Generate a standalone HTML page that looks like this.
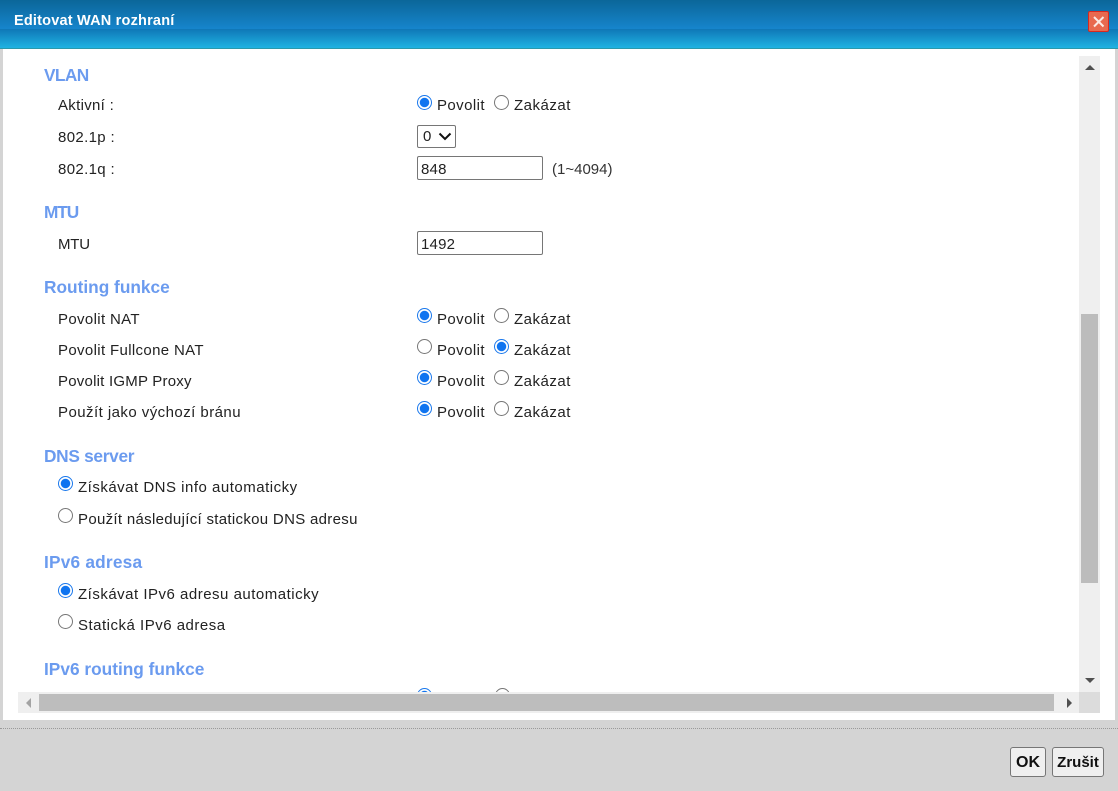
<!DOCTYPE html>
<html lang="cs"><head><meta charset="utf-8"><title>Editovat WAN rozhraní</title>
<style>
html,body{margin:0;padding:0}
body{position:relative;width:1118px;height:791px;overflow:hidden;background:#d4d4d4;font-family:"Liberation Sans",sans-serif;color:#222;font-size:15px}
div,span,input,select,svg{position:absolute}
.t{white-space:nowrap;line-height:18px;height:18px}
.h{white-space:nowrap;font-weight:bold;font-size:17.3px;line-height:22px;height:22px;color:#6b9bef;left:44px}
.l{left:58px;letter-spacing:.35px}
.p{left:437px;letter-spacing:.42px}
.z{left:514px;letter-spacing:.5px}
input[type=radio]{margin:0;width:15px;height:15px;appearance:none;-webkit-appearance:none;box-sizing:border-box;border:1.3px solid #767676;border-radius:50%;background:#fff}
input[type=radio]:checked{border:1.8px solid #1a78ec;background:radial-gradient(circle,#0f74f0 0,#0f74f0 4.4px,#fff 5px)}
.box{border:1px solid #767676;border-radius:2px;background:#fff;box-sizing:border-box;left:417px;width:126px;height:24px;line-height:25px;padding-left:3px;font-size:15px;letter-spacing:.2px;color:#222}
.btn{border:1px solid #767676;border-radius:3px;background:#efefef;box-sizing:border-box;text-align:center;font-weight:bold;font-size:16px;color:#111;top:747px;height:30px;line-height:29px}
</style></head><body>
<div style="left:0;top:0;width:1118px;height:29px;background:linear-gradient(#0b6699,#1685cc)"></div>
<div style="left:0;top:29px;width:1118px;height:19px;background:linear-gradient(#0f77b7,#1fb3e2)"></div>
<div style="left:0;top:48px;width:1118px;height:1px;background:#2b98ab"></div>
<div class="t" style="left:14px;top:12px;color:#fff;font-weight:bold;font-size:14.5px;letter-spacing:.2px">Editovat WAN rozhraní</div>
<svg style="left:1088px;top:11px" width="22" height="22" viewBox="0 0 22 22"><rect x=".5" y=".5" width="20" height="20" rx="1.5" fill="#e8694f" stroke="#d8281f"/><path d="M6 6L15.5 15.5M15.5 6L6 15.5" stroke="#fbe9e4" stroke-width="2"/></svg>

<div style="left:3px;top:49px;width:1112px;height:671px;background:#fff;overflow:hidden">
<div style="left:0;top:0;width:1097px;height:643px;overflow:hidden">
<input type="radio" checked style="left:414px;top:639px"><input type="radio" style="left:492px;top:639px">
</div>
</div>

<div class="h" style="top:64px;letter-spacing:-.6px">VLAN</div>
<div class="t l" style="top:97px;letter-spacing:.3px">Aktivní :</div>
<input type="radio" checked style="left:417px;top:95px"><div class="t p" style="top:97px">Povolit</div>
<input type="radio" style="left:494px;top:95px"><div class="t z" style="top:97px">Zakázat</div>
<div class="t l" style="top:129px">802.1p :</div>
<div style="left:417px;top:125px;width:39px;height:23px;box-sizing:border-box;border:1px solid #767676;border-radius:2px;background:#fff">
<span class="t" style="left:5px;top:2px">0</span>
<svg style="left:20px;top:6px" width="14" height="9" viewBox="0 0 14 9"><path d="M1.5 1.5L7 7L12.5 1.5" fill="none" stroke="#111" stroke-width="2"/></svg></div>
<div class="t l" style="top:161px">802.1q :</div>
<div class="box" style="top:156px">848</div>
<div class="t" style="left:552px;top:161px;letter-spacing:0;color:#333">(1~4094)</div>

<div class="h" style="top:201px;letter-spacing:-1.1px">MTU</div>
<div class="t l" style="top:236px;letter-spacing:-.2px">MTU</div>
<div class="box" style="top:231px">1492</div>

<div class="h" style="top:276px">Routing funkce</div>
<div class="t l" style="top:311px">Povolit NAT</div>
<input type="radio" checked style="left:417px;top:308px"><div class="t p" style="top:311px">Povolit</div>
<input type="radio" style="left:494px;top:308px"><div class="t z" style="top:311px">Zakázat</div>
<div class="t l" style="top:342px">Povolit Fullcone NAT</div>
<input type="radio" style="left:417px;top:339px"><div class="t p" style="top:342px">Povolit</div>
<input type="radio" checked style="left:494px;top:339px"><div class="t z" style="top:342px">Zakázat</div>
<div class="t l" style="top:373px;letter-spacing:.22px">Povolit IGMP Proxy</div>
<input type="radio" checked style="left:417px;top:370px"><div class="t p" style="top:373px">Povolit</div>
<input type="radio" style="left:494px;top:370px"><div class="t z" style="top:373px">Zakázat</div>
<div class="t l" style="top:404px;letter-spacing:.45px">Použít jako výchozí bránu</div>
<input type="radio" checked style="left:417px;top:401px"><div class="t p" style="top:404px">Povolit</div>
<input type="radio" style="left:494px;top:401px"><div class="t z" style="top:404px">Zakázat</div>

<div class="h" style="top:445px;letter-spacing:-.3px">DNS server</div>
<input type="radio" checked style="left:58px;top:476px"><div class="t" style="left:78px;top:479px;letter-spacing:.5px">Získávat DNS info automaticky</div>
<input type="radio" style="left:58px;top:508px"><div class="t" style="left:78px;top:511px;letter-spacing:.31px">Použít následující statickou DNS adresu</div>

<div class="h" style="top:551px;letter-spacing:.2px">IPv6 adresa</div>
<input type="radio" checked style="left:58px;top:583px"><div class="t" style="left:78px;top:586px;letter-spacing:.5px">Získávat IPv6 adresu automaticky</div>
<input type="radio" style="left:58px;top:614px"><div class="t" style="left:78px;top:617px;letter-spacing:.5px">Statická IPv6 adresa</div>

<div class="h" style="top:658px;letter-spacing:0">IPv6 routing funkce</div>

<div style="left:1079px;top:56px;width:21px;height:636px;background:#efefef"></div>
<div style="left:1081px;top:314px;width:17px;height:269px;background:#bcbcbc"></div>
<svg style="left:1084px;top:64px" width="12" height="7"><path d="M1 6L6 1L11 6Z" fill="#505050"/></svg>
<svg style="left:1084px;top:677px" width="12" height="7"><path d="M1 1L6 6L11 1Z" fill="#505050"/></svg>
<div style="left:18px;top:692px;width:1061px;height:21px;background:#efefef"></div>
<div style="left:39px;top:694px;width:1015px;height:17px;background:#bdbdbd"></div>
<div style="left:1079px;top:692px;width:21px;height:21px;background:#dcdcdc"></div>
<svg style="left:25px;top:697px" width="7" height="12"><path d="M6 1L1 6L6 11Z" fill="#a3a3a3"/></svg>
<svg style="left:1066px;top:697px" width="7" height="12"><path d="M1 1L6 6L1 11Z" fill="#505050"/></svg>

<div style="left:0;top:728px;width:1118px;height:0;border-top:1px dotted #9a9a9a"></div>
<div class="btn" style="left:1010px;width:36px">OK</div>
<div class="btn" style="left:1052px;width:52px;font-size:15px">Zrušit</div>
</body></html>
